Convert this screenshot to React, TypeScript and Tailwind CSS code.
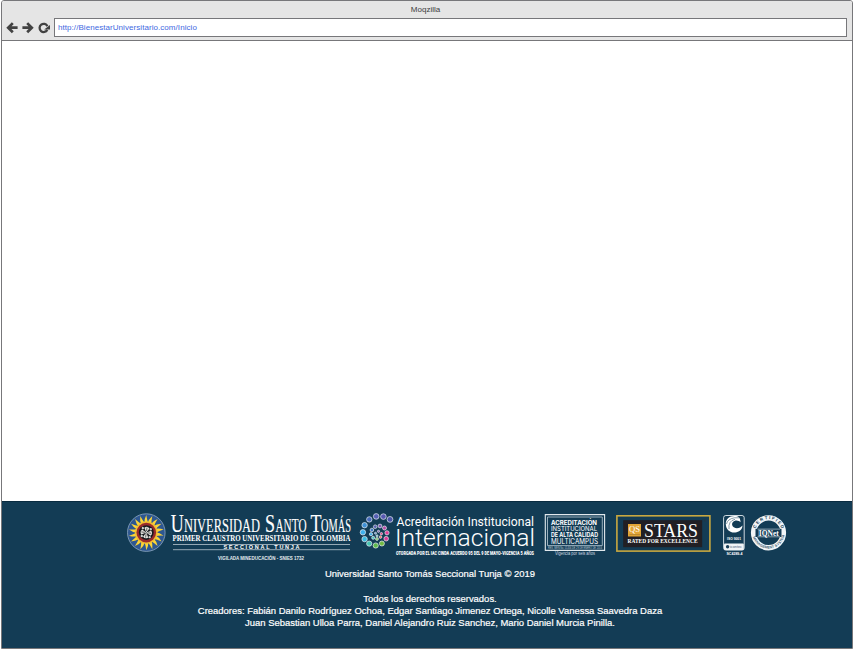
import React from "react";

const sans = "'Liberation Sans', Arial, sans-serif";
const serif = "'Liberation Serif', 'Times New Roman', serif";

type LabelProps = {
  x: number;
  y: number;
  w: number;
  size: number;
  children: string;
  family?: string;
  weight?: number;
  fill?: string;
};

/* A line of logo lettering, fitted to a fixed width. */
function Label({ x, y, w, size, children, family = sans, weight = 400, fill = "#fff" }: LabelProps) {
  return (
    <text x={x} y={y} textLength={w} lengthAdjust="spacingAndGlyphs" fontSize={size} fontFamily={family} fontWeight={weight} fill={fill}>
      {children}
    </text>
  );
}

function Seal() {
  const rays = Array.from({ length: 18 }, (_, i) => i * 20);
  return (
    <g transform="translate(146.3 532.6)">
      <circle r="18.8" fill="#2e5791" stroke="#8fa9c2" strokeWidth="0.8" />
      {rays.map((a) => (
        <path key={a} d="M-2 -9 Q-2.4 -13 0 -17.6 Q0.6 -13 2 -9Z" fill="#fbd437" transform={`rotate(${a})`} />
      ))}
      <circle r="11.2" fill="#f3bd32" />
      <circle r="9.8" fill="#992a2c" />
      <circle r="7.4" fill="#17191d" />
      {[0, 90, 180, 270].map((a) => (
        <g key={a} transform={`rotate(${a + 8})`}>
          <path d="M0 0 L-2.6 -4.6 Q0 -7 2.6 -4.6Z" fill="#e4e4e0" />
          <circle cx="4" cy="-4" r="1.2" fill="#d0d0cc" />
          <path d="M0 -1.6V-5" stroke="#333" strokeWidth="0.7" />
        </g>
      ))}
    </g>
  );
}

function SantoTomas() {
  return (
    <svg className="h-[56px] w-[228px] overflow-visible" viewBox="126 508 228 56">
      <Seal />
      <g stroke="#fff" strokeWidth="0.15">
        <Label x={170.8} y={532.4} w={13} size={25.5} family={serif}>U</Label>
        <Label x={184} y={532.4} w={76} size={19.5} family={serif}>NIVERSIDAD</Label>
        <Label x={265} y={532.4} w={10} size={25.5} family={serif}>S</Label>
        <Label x={275.5} y={532.4} w={31} size={19.5} family={serif}>ANTO</Label>
        <Label x={310.5} y={532.4} w={11} size={25.5} family={serif}>T</Label>
        <Label x={321} y={532.4} w={30} size={19.5} family={serif}>OMÁS</Label>
      </g>
      <Label x={172.5} y={540.6} w={178} size={8.4} family={serif} weight={700}>PRIMER CLAUSTRO UNIVERSITARIO DE COLOMBIA</Label>
      <path d="M173 544.5H350M173 549.7H350" stroke="#b7c5cf" strokeWidth="0.8" />
      <text x="223.5" y="549.2" textLength="76" lengthAdjust="spacing" fontSize="5.5" fontFamily={sans} fontWeight="700" fill="#fff">SECCIONAL TUNJA</text>
      <Label x={218} y={560.3} w={86} size={4.5} weight={700} fill="#e6ecf0">VIGILADA MINEDUCACIÓN - SNIES 1732</Label>
    </svg>
  );
}

const dots: [number, number, number, string][] = [
  [390, 519.4, 2.9, "#4a55a8"], [383.4, 516.6, 2.8, "#5759b0"], [376.2, 516.4, 2.8, "#5560b5"],
  [369.3, 519.4, 2.7, "#486cbc"], [364.6, 525.2, 2.7, "#3f90d4"], [362.9, 532.3, 2.7, "#3fb2ee"],
  [364.6, 539.1, 2.7, "#3cbce2"], [369.2, 543.6, 2.6, "#45c4b2"], [375.7, 545.5, 2.6, "#5fbb4e"],
  [381.9, 543.5, 2.5, "#72bb44"], [386.2, 538.7, 2.3, "#dc3f98"], [387, 532.8, 2.1, "#e53b98"],
  [384.5, 528, 2, "#b84ea8"], [380, 526, 1.9, "#7a58b0"], [375.2, 526.7, 1.8, "#5a62b4"],
  [371.9, 530, 1.8, "#457bc8"], [371, 534.2, 1.6, "#42b0ea"], [373.2, 537.8, 1.5, "#45c4bd"],
  [377, 539, 1.4, "#76bd58"], [380.5, 537.1, 1.3, "#ef685f"], [381.4, 533.7, 1.2, "#e5408a"],
  [378.5, 531.3, 1.1, "#9068b5"], [375.5, 533.2, 1, "#6595cc"], [377, 535.8, 1, "#63c7bd"],
];

function Internacional() {
  const family = "Roboto, sans-serif";
  return (
    <svg className="h-[56px] w-[178px] overflow-visible" viewBox="358 508 178 56">
      {dots.map(([x, y, r, color], i) => (
        <circle key={i} cx={x} cy={y} r={r} fill={color} stroke="#e6edf2" strokeWidth="0.7" />
      ))}
      <Label x={396.5} y={525.8} w={137.5} size={12.6} family={family}>Acreditación Institucional</Label>
      <Label x={395} y={546.2} w={140} size={24.5} family={family} weight={300}>Internacional</Label>
      <Label x={396} y={555} w={138} size={6.2} family={family} weight={900}>OTORGADA POR EL IAC CINDA ACUERDO 95 DEL 9 DE MAYO-VIGENCIA 5 AÑOS</Label>
    </svg>
  );
}

function Multicampus() {
  const family = "Inter, sans-serif";
  return (
    <svg className="h-[56px] w-[64px] overflow-visible" viewBox="543 508 64 56">
      <path d="M545.3 514.6H604.6V550.4H545.3Z" fill="none" stroke="#e1e8ed" strokeWidth="1.1" />
      <path d="M547.5 517H602.3V545.6H547.5Z" fill="none" stroke="#a8bbc8" strokeWidth="0.9" />
      <Label x={551} y={525} w={46} size={6} family={family} weight={700}>ACREDITACIÓN</Label>
      <Label x={551} y={531} w={46} size={6.2} family={family}>INSTITUCIONAL</Label>
      <Label x={551} y={537.2} w={47} size={5.8} family={family} weight={700}>DE ALTA CALIDAD</Label>
      <Label x={551} y={543.6} w={47} size={7} family={family}>MULTICAMPUS</Label>
      <Label x={548} y={549.2} w={54} size={3} fill="#bdcbd5">RES. MEN No. 01456 DE 29 DE ENERO DE 2016</Label>
      <Label x={555} y={555.2} w={40} size={4.6} fill="#cdd8e0">Vigencia por seis años</Label>
    </svg>
  );
}

function Stars() {
  return (
    <svg className="h-[56px] w-[98px] overflow-visible" viewBox="614 508 98 56">
      <rect x="616.9" y="515.8" width="93" height="35.3" fill="none" stroke="#c9a840" strokeWidth="1.6" />
      <rect x="623.2" y="520.2" width="79" height="27" fill="#211f24" />
      <rect x="628" y="524" width="13" height="12.5" fill="#e2a536" />
      <Label x={629} y={531.7} w={11} size={8.5} family={serif}>QS</Label>
      <path d="M629.5 534.6H640" stroke="#b9872e" strokeWidth="1" />
      <Label x={644} y={537} w={54} size={18.5} family={serif}>STARS</Label>
      <Label x={627.5} y={543} w={70} size={5.8} family={serif} weight={700}>RATED FOR EXCELLENCE</Label>
      <Label x={702.5} y={521.5} w={4} size={3} fill="#26353f">TM</Label>
    </svg>
  );
}

function Icontec() {
  return (
    <svg className="h-[56px] w-[24px] overflow-visible" viewBox="722 508 24 56">
      <rect x="723.6" y="515.5" width="20.6" height="34.6" rx="2.2" fill="none" stroke="#e4ebef" strokeWidth="0.9" />
      <path d="M738 516.5C731 514.8 725.4 518.3 725.8 524.5C726.2 530.8 731.5 533.5 736.6 532.2C740.4 531.3 742.5 529 742.4 525.6C740.6 528 736.7 529.4 733.8 527.3C731.1 525.3 731.7 521.6 735 520.7C737 520.1 739.5 521 740.6 522.3C740.5 519.7 739.6 517.5 738 516.5Z" fill="#fff" />
      <path d="M726.5 524Q727.5 519 734.5 517.8H739M729 529Q728 521 735 519.3" stroke="#36596f" strokeWidth="0.6" fill="none" />
      <Label x={727} y={540.3} w={14} size={4.1} weight={700}>ISO 9001</Label>
      <rect x="724" y="543.4" width="19.8" height="6.5" rx="1" fill="#f1f4f6" />
      <circle cx="727.6" cy="546.7" r="1.7" fill="#183e57" />
      <Label x={730} y={548.2} w={12} size={4} fill="#496377">icontec</Label>
      <Label x={726.5} y={555} w={16} size={4.4} weight={700}>SC4289-4</Label>
    </svg>
  );
}

function IQNet() {
  return (
    <svg className="h-[56px] w-[36px] overflow-visible" viewBox="751 508 36 56">
      <circle cx="768.5" cy="532.8" r="14.9" fill="none" stroke="#f2f5f7" strokeWidth="5.4" />
      <defs>
        <path id="certified-arc" d="M755.1 532.5A13.4 13.4 0 0 1 781.9 532.5" />
        <path id="system-arc" d="M752.3 534A16.3 16.3 0 0 0 784.7 534" />
      </defs>
      <text fontSize="4.4" fontFamily={sans} fontWeight="700" fill="#173f59" textLength="34" lengthAdjust="spacing">
        <textPath href="#certified-arc" startOffset="4">CERTIFIED</textPath>
      </text>
      <text fontSize="3.6" fontFamily={sans} fontWeight="700" fill="#446276" textLength="43" lengthAdjust="spacing">
        <textPath href="#system-arc" startOffset="3">MANAGEMENT SYSTEM</textPath>
      </text>
      <rect x="755.5" y="528.8" width="26" height="8.2" fill="#123a54" />
      <path d="M757.5 529.1H780M757.5 536.8H780" stroke="#dce5ea" strokeWidth="0.6" />
      <rect x="758.4" y="529.9" width="6.4" height="6.2" fill="none" stroke="#8fa4b1" strokeWidth="0.5" />
      <Label x={758.8} y={535.7} w={20} size={7.6} family={serif} weight={700}>IQNet</Label>
    </svg>
  );
}

function Arrow({ flip = false }: { flip?: boolean }) {
  return (
    <svg className={flip ? "h-[12px] w-[12px] -scale-x-100" : "h-[12px] w-[12px]"} viewBox="0 0 12 12">
      <path d="M11.6 5.7H2.5M6.8 1.1L2.2 5.7L6.8 10.3" fill="none" stroke="#424242" strokeWidth="2.7" />
    </svg>
  );
}

function Reload() {
  return (
    <svg className="h-[12px] w-[12px]" viewBox="0 0 12 12">
      <path d="M9.3 7.9A4.1 4.1 0 1 1 9.4 4.2" fill="none" stroke="#424242" strokeWidth="2.3" />
      <path d="M12 3V7.6H6.2Z" fill="#424242" />
    </svg>
  );
}

export default function App() {
  return (
    <div className="h-[651px] w-[854px] bg-white pl-px font-['Liberation_Sans',Arial,sans-serif]">
      <div className="flex h-[649px] w-[852px] flex-col overflow-hidden rounded-t-[3px] border border-[#77777a] bg-white">
        <header className="flex h-[40px] shrink-0 flex-col border-b border-[#77777a] bg-[#e5e5e5]">
          <div className="h-[17px] pt-[4px] pr-[3px] text-center text-[8px] leading-[10px] text-[#3d3d3d]">Moqzilla</div>
          <div className="flex h-[19px] items-center pr-[5px] pl-[4px]">
            <div className="flex w-[48px] items-center gap-[4px]">
              <Arrow />
              <Arrow flip />
              <Reload />
            </div>
            <div className="flex h-[19px] flex-1 items-center border border-[#77777a] bg-white pt-px pl-[3px] text-[8px] leading-[10px] whitespace-nowrap text-[#4169e1]">
              <span className="tracking-[0.06px]">http://BienestarUniversitario.com/Inicio</span>
            </div>
          </div>
        </header>
        <main className="flex-1 bg-white" />
        <footer className="h-[147px] shrink-0 border-t border-[#092b40] bg-[#133c55] text-white">
          <div className="flex h-[63px] items-start pt-[6px] pl-[124px]">
            <SantoTomas />
            <div className="ml-[4px] flex"><Internacional /></div>
            <div className="ml-[7px] flex"><Multicampus /></div>
            <div className="ml-[7px] flex"><Stars /></div>
            <div className="ml-[10px] flex"><Icontec /></div>
            <div className="ml-[5px] flex"><IQNet /></div>
          </div>
          <div className="w-[856px] pt-[3px] text-center text-[9.46px] leading-[12px] [-webkit-text-stroke:0.2px_white]">
            <p>Universidad Santo Tomás Seccional Tunja © 2019</p>
            <p className="mt-[13px]">Todos los derechos reservados.</p>
            <p>Creadores: Fabián Danilo Rodríguez Ochoa, Edgar Santiago Jimenez Ortega, Nicolle Vanessa Saavedra Daza</p>
            <p>Juan Sebastian Ulloa Parra, Daniel Alejandro Ruiz Sanchez, Mario Daniel Murcia Pinilla.</p>
          </div>
        </footer>
      </div>
    </div>
  );
}
